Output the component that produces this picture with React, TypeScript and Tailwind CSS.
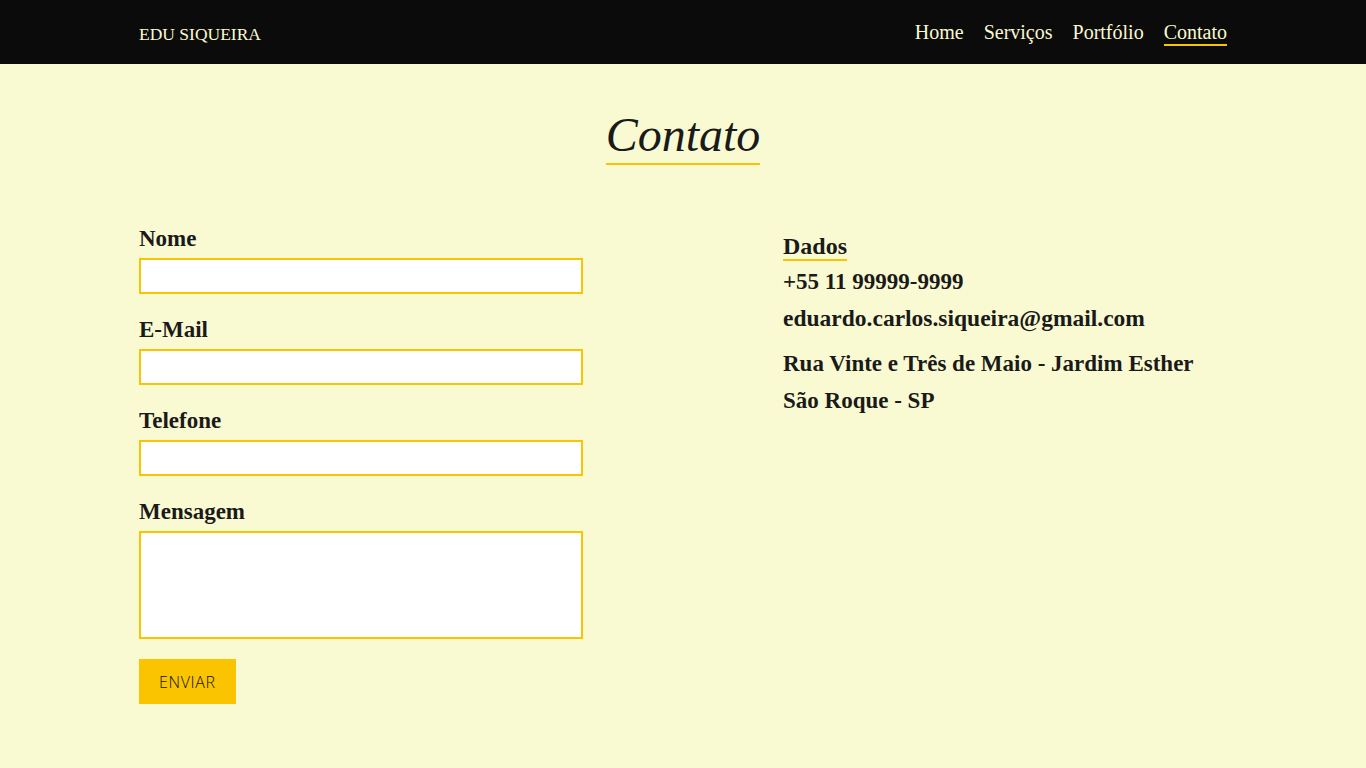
import React from 'react';

const serif = "font-['Liberation_Serif','Times_New_Roman',serif]";

const fields = [
  { label: 'Nome', type: 'text' },
  { label: 'E-Mail', type: 'email' },
  { label: 'Telefone', type: 'tel' },
];

const App: React.FC = () => {
  return (
    <div className={`min-h-screen bg-[#fafad2] text-[#1a1a1a] ${serif}`}>
      <header className="h-16 bg-[#0b0b0b]">
        <div className="w-[1088px] mx-auto h-full flex items-center justify-between">
          <a href="#" className="text-[17.5px] text-[#fafad2] pt-[5px]">
            EDU SIQUEIRA
          </a>
          <nav className="flex gap-5 text-[20px] leading-6 text-[#fafad2] pt-[2px]">
            <a href="#" className="border-b-2 border-transparent">Home</a>
            <a href="#" className="border-b-2 border-transparent">Serviços</a>
            <a href="#" className="border-b-2 border-transparent">Portfólio</a>
            <a href="#" className="border-b-2 border-[#fac400]">Contato</a>
          </nav>
        </div>
      </header>

      <main className="w-[1088px] mx-auto pt-[43px] pb-16">
        <div className="flex justify-center">
          <h1 className="text-[48px] leading-[56px] italic border-b-2 border-[#fac400]">
            Contato
          </h1>
        </div>

        <div className="flex mt-[59px]">
          <form className="w-[444px]" onSubmit={(e) => e.preventDefault()}>
            {fields.map((f) => (
              <div key={f.label} className="mb-[21px]">
                <label className="block text-[23px] leading-[28px] pt-[1px] font-bold mb-[5px]">
                  {f.label}
                </label>
                <input
                  type={f.type}
                  className="block w-full h-9 bg-white border-2 border-[#fac400] outline-none px-2"
                />
              </div>
            ))}
            <div>
              <label className="block text-[23px] leading-[28px] pt-[1px] font-bold mb-[5px]">
                Mensagem
              </label>
              <textarea className="block w-full h-[108px] bg-white border-2 border-[#fac400] outline-none resize-none p-2" />
            </div>
            <button
              type="submit"
              className="mt-5 h-[45px] px-5 bg-[#fac400] font-['Open_Sans',sans-serif] font-light text-[16px] tracking-[0.04em] text-[#111]"
            >
              ENVIAR
            </button>
          </form>

          <div className="ml-[200px] pt-[9px]">
            <h3 className="inline-block text-[24px] leading-[26px] font-bold border-b-2 border-[#fac400]">
              Dados
            </h3>
            <div className="text-[23px] leading-[37px] font-bold pt-[2px]">
              <p>+55 11 99999-9999</p>
              <p className="text-[23.5px]">eduardo.carlos.siqueira@gmail.com</p>
              <p className="mt-2">
                Rua Vinte e Três de Maio - Jardim Esther
                <br />
                São Roque - SP
              </p>
            </div>
          </div>
        </div>
      </main>
    </div>
  );
};

export default App;
